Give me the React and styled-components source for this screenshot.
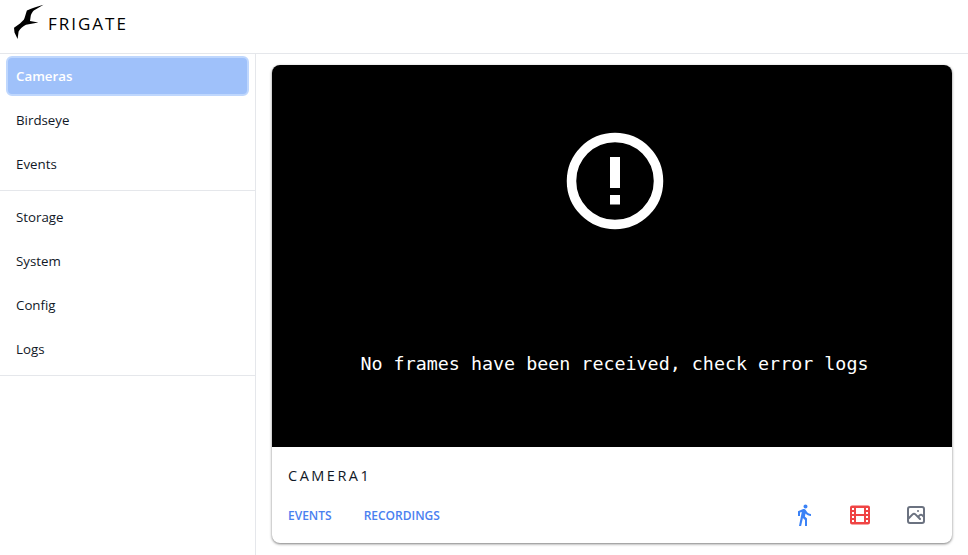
import styled, { createGlobalStyle } from 'styled-components';

const Global = createGlobalStyle`
    html, body {
        margin: 0;
        height: 100%;
        background: #fff;
    }
    body {
        font-family: "Open Sans", "Noto Sans", sans-serif;
        color: #111827;
        overflow: hidden;
    }
`;

const Page = styled.div`
    display: flex;
    flex-direction: column;
    width: 968px;
    height: 555px;
`;

const Header = styled.header`
    display: flex;
    align-items: center;
    gap: 3px;
    flex: 0 0 54px;
    padding: 0 0 9px 13px;
    box-sizing: border-box;
    border-bottom: 1px solid #e5e7eb;
`;

const Brand = styled.div`
    font-size: 17px;
    font-weight: 500;
    letter-spacing: 2px;
    color: #000;
    line-height: 24px;
    margin-top: 4px;
`;

const Body = styled.div`
    display: flex;
    flex: 1;
    min-height: 0;
`;

const Sidebar = styled.nav`
    width: 256px;
    box-sizing: border-box;
    border-right: 1px solid #e5e7eb;
`;

const Group = styled.div`
    display: flex;
    flex-direction: column;
    padding: ${(p) => (p.$first ? '2px 0 4px' : '4px 0')};
    border-bottom: 1px solid #e5e7eb;
`;

const Item = styled.a`
    display: flex;
    align-items: center;
    height: 44px;
    padding-left: 16px;
    font-size: 13.3px;
    font-weight: ${(p) => (p.$active ? 600 : 500)};
    color: ${(p) => (p.$active ? '#fff' : '#111827')};
    box-sizing: border-box;
    ${(p) =>
        p.$active &&
        `
        margin: 0 6px 2px;
        padding-left: 8px;
        height: 40px;
        border-radius: 6px;
        background: #9fc1fa;
        border: 2px solid #bfd7fd;
    `}
`;

const Main = styled.main`
    flex: 1;
    padding: 11px 16px 0;
`;

const Card = styled.article`
    width: 680px;
    height: 478px;
    border-radius: 8px;
    overflow: hidden;
    background: #fff;
    box-shadow: 0 1px 3px 0 rgba(0, 0, 0, 0.45), 0 1px 2px 0 rgba(0, 0, 0, 0.1);
`;

const Feed = styled.div`
    display: flex;
    flex-direction: column;
    align-items: center;
    height: 382px;
    padding: 67px 0 0 5px;
    box-sizing: border-box;
    background: #000;
    color: #fff;
`;

const FeedMessage = styled.div`
    margin-top: 122px;
    font-family: "DejaVu Sans Mono", monospace;
    font-size: 18.35px;
    line-height: 24px;
    white-space: nowrap;
`;

const Footer = styled.div`
    padding: 17px 16px 0;
`;

const Title = styled.div`
    font-size: 14.5px;
    line-height: 24px;
    letter-spacing: 2.5px;
    font-weight: 500;
    color: #111827;
`;

const Actions = styled.div`
    display: flex;
    align-items: center;
    margin-top: 15px;
    height: 24px;
`;

const Links = styled.div`
    display: flex;
    flex: 1;
    gap: 32px;
`;

const TextLink = styled.a`
    font-size: 12px;
    font-weight: 600;
    color: #4a80f0;
`;

const Icons = styled.div`
    display: flex;
    gap: 32px;
    margin-right: 8px;
`;

const IconSlot = styled.svg`
    display: block;
    width: 24px;
    height: 24px;
    color: ${(p) => p.$color};
`;

const Bird = () => (
    <svg width="32" height="40" viewBox="0 0 32 40" aria-hidden="true">
        <path
            d="M30.5 2.8 C26 4 21.5 5.6 18 6.8 L13.9 8.6 C12.8 11.5 12.2 15 11 17.5 L7 21.5 L1 25.8 L1.5 30.5 L4.6 37 L5.6 29.5 C7.5 26.5 10 24 13 22.8 L25.3 20.4 L17 19 L17.8 13.5 C18.5 11.5 19.5 9.8 20.8 8.6 Z"
            fill="#000"
        />
    </svg>
);

const App = () => (
    <Page>
        <Global />
        <Header>
            <Bird />
            <Brand>FRIGATE</Brand>
        </Header>
        <Body>
            <Sidebar>
                <Group $first>
                    <Item $active>Cameras</Item>
                    <Item>Birdseye</Item>
                    <Item>Events</Item>
                </Group>
                <Group>
                    <Item>Storage</Item>
                    <Item>System</Item>
                    <Item>Config</Item>
                    <Item>Logs</Item>
                </Group>
            </Sidebar>
            <Main>
                <Card>
                    <Feed>
                        <svg width="98" height="98" viewBox="0 0 98 98" aria-hidden="true">
                            <circle cx="49" cy="49" r="43.5" fill="none" stroke="#fff" strokeWidth="9.5" />
                            <rect x="44" y="25" width="10" height="31" fill="#fff" />
                            <rect x="44" y="63" width="10" height="9.5" fill="#fff" />
                        </svg>
                        <FeedMessage>No frames have been received, check error logs</FeedMessage>
                    </Feed>
                    <Footer>
                        <Title>CAMERA1</Title>
                        <Actions>
                            <Links>
                                <TextLink>EVENTS</TextLink>
                                <TextLink>RECORDINGS</TextLink>
                            </Links>
                            <Icons>
                                <IconSlot $color="#3b82f6" viewBox="0 0 24 24" fill="currentColor">
                                    <path d="M13.5 5.5c1.1 0 2-.9 2-2s-.9-2-2-2-2 .9-2 2 .9 2 2 2zM9.8 8.9 7 23h2.1l1.8-8 2.1 2v6h2v-7.5l-2.1-2 .6-3C14.8 12 16.8 13 19 13v-2c-1.9 0-3.5-1-4.3-2.4l-1-1.6c-.4-.6-1-1-1.7-1-.3 0-.5.1-.8.1L6 8.3V13h2V9.6l1.8-.7" />
                                </IconSlot>
                                <IconSlot $color="#ef4444" viewBox="0 0 24 24" fill="currentColor">
                                    <path
                                        fillRule="evenodd"
                                        d="M4 2.5h16a2 2 0 0 1 2 2v15a2 2 0 0 1-2 2H4a2 2 0 0 1-2-2v-15a2 2 0 0 1 2-2zM8 5v6h8V5zM8 13v6h8v-6zM4 5v2h2V5zM4 9v2h2V9zM4 13v2h2v-2zM4 17v2h2v-2zM18 5v2h2V5zM18 9v2h2V9zM18 13v2h2v-2zM18 17v2h2v-2z"
                                    />
                                </IconSlot>
                                <IconSlot $color="#6b7280" viewBox="0 0 24 24" fill="none" stroke="currentColor" strokeWidth="2" strokeLinecap="round" strokeLinejoin="round">
                                    <path d="m4 16 4.586-4.586a2 2 0 0 1 2.828 0L16 16m-2-2 1.586-1.586a2 2 0 0 1 2.828 0L20 14m-6-6h.01M6 20h12a2 2 0 0 0 2-2V6a2 2 0 0 0-2-2H6a2 2 0 0 0-2 2v12a2 2 0 0 0 2 2z" />
                                </IconSlot>
                            </Icons>
                        </Actions>
                    </Footer>
                </Card>
            </Main>
        </Body>
    </Page>
);

export default App;
